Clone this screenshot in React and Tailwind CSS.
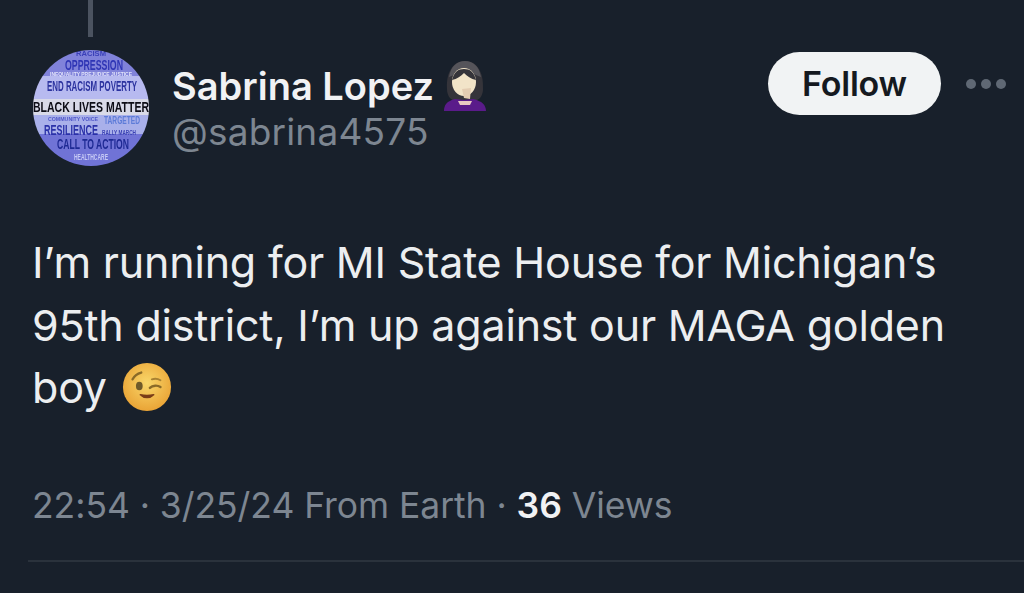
import React from "react";

const Avatar = () => (
  <svg width="118" height="120" viewBox="0 0 118 120" className="shrink-0">
    <defs>
      <clipPath id="disc">
        <circle cx="59" cy="60" r="58" />
      </clipPath>
      <filter id="soft">
        <feGaussianBlur stdDeviation="0.45" />
      </filter>
    </defs>
    <g clipPath="url(#disc)" filter="url(#soft)" fontFamily="'Liberation Sans',sans-serif" fontWeight="700">
      <rect width="118" height="120" fill="#8f8fe0" />
      <rect x="0" y="0" width="118" height="30" fill="#8082da" />
      <rect x="0" y="28" width="118" height="24" fill="#b7baf0" />
      <rect x="0" y="66" width="118" height="20" fill="#a9b0ea" />
      <rect x="0" y="86" width="118" height="34" fill="#7073d6" />
      <text x="44" y="8" fontSize="7" fill="#3a40b8" textLength="30" lengthAdjust="spacingAndGlyphs">RACISM</text>
      <text x="33" y="22" fontSize="15" fill="#2f35b5" textLength="58" lengthAdjust="spacingAndGlyphs">OPPRESSION</text>
      <text x="18" y="28" fontSize="6" fill="#e2e4fb" textLength="82" lengthAdjust="spacingAndGlyphs">INEQUALITY PREJUDICE JUSTICE</text>
      <text x="15" y="43" fontSize="15" fill="#2c339f" textLength="90" lengthAdjust="spacingAndGlyphs">END RACISM POVERTY</text>
      <rect x="0" y="51" width="118" height="16" fill="#d9dae8" />
      <text x="1" y="64" fontSize="15" fill="#0b0b14" textLength="116" lengthAdjust="spacingAndGlyphs">BLACK LIVES MATTER</text>
      <text x="16" y="73" fontSize="6" fill="#5057c8" textLength="50" lengthAdjust="spacingAndGlyphs">COMMUNITY VOICE</text>
      <text x="72" y="76" fontSize="10" fill="#5d7bd8" textLength="36" lengthAdjust="spacingAndGlyphs">TARGETED</text>
      <text x="12" y="87" fontSize="15" fill="#2a30a8" textLength="54" lengthAdjust="spacingAndGlyphs">RESILIENCE</text>
      <text x="70" y="87" fontSize="7" fill="#3b42b4" textLength="34" lengthAdjust="spacingAndGlyphs">RALLY MARCH</text>
      <text x="25" y="101" fontSize="14" fill="#1f2a94" textLength="72" lengthAdjust="spacingAndGlyphs">CALL TO ACTION</text>
      <text x="42" y="112" fontSize="9" fill="#c6caf5" textLength="34" lengthAdjust="spacingAndGlyphs">HEALTHCARE</text>
    </g>
  </svg>
);

const NameEmoji = () => (
  <svg width="50" height="52" viewBox="0 0 50 52" className="-mt-[4px] shrink-0">
    <path d="M7 30C6 12 14 2 25 2s19 10 18 28c0 6-3 10-6 11H13c-3-1-6-5-6-11z" fill="#35343a" />
    <path d="M9 18C11 7 17 2 25 2s14 5 16 16c-5-2-11-5-16-5s-11 3-16 5z" fill="#55545a" />
    <ellipse cx="24" cy="23" rx="12" ry="14" fill="#f2e4c8" />
    <path d="M12 21c2-8 6-11 12-11s10 3 12 11c-5-1-9-4-12-7-3 3-7 6-12 7z" fill="#35343a" />
    <path d="M22 30l2 9 6 1 1-11z" fill="#e4cdb2" />
    <path d="M4 52c0-6 3-10 11-12l9 1 9-1c9 2 13 6 13 12z" fill="#5a1b8a" />
    <path d="M18 42h14l-2 4H20z" fill="#e9c9c2" />
  </svg>
);

const WinkEmoji = () => (
  <svg width="50" height="50" viewBox="0 0 52 52">
    <defs>
      <radialGradient id="face" cx="50%" cy="42%" r="60%">
        <stop offset="0%" stopColor="#f9d76a" />
        <stop offset="100%" stopColor="#e9a234" />
      </radialGradient>
    </defs>
    <circle cx="26" cy="26" r="25" fill="url(#face)" />
    <path d="M11 18c2-4 5-6 9-7" stroke="#8a6a28" strokeWidth="2.5" fill="none" strokeLinecap="round" />
    <ellipse cx="18" cy="25" rx="3.5" ry="4.5" fill="#6f5a2a" />
    <path d="M29 27c3-3 8-3 11-1" stroke="#8a6a28" strokeWidth="2.5" fill="none" strokeLinecap="round" />
    <path d="M31 18c3-1 6-1 9 1" stroke="#a98232" strokeWidth="2" fill="none" strokeLinecap="round" />
    <path d="M19 34c4 4 10 4 14 0-4 1-10 1-14 0z" fill="#7a3d18" stroke="#7a3d18" strokeWidth="1.5" strokeLinejoin="round" />
  </svg>
);

export default function App() {
  return (
    <div className="relative h-[593px] w-[1024px] overflow-hidden bg-[#18202b] font-['Inter','Liberation_Sans',sans-serif] text-[#eef0f2]">
      {/* thread line coming down from the parent tweet */}
      <div className="ml-[88px] h-[37px] w-[5px] bg-[#4b5360]" />

      <div className="mt-[11px] flex h-[120px] items-start pl-[32px] pr-[18px]">
        <Avatar />
        <div className="ml-[22px] mt-[16px]">
          <div className="flex h-[45px] items-center">
            <span className="text-[38px] font-semibold leading-[45px] text-[#f1f2f4]">Sabrina Lopez</span>
            <span className="ml-[6px] flex">
              <NameEmoji />
            </span>
          </div>
          <div className="text-[37px] leading-[45px] tracking-[0.2px] text-[#7d8691]">@sabrina4575</div>
        </div>
        <div className="ml-auto mt-[4px] flex items-center">
          <button className="flex h-[63px] w-[173px] items-center justify-center rounded-full bg-[#f1f3f4] text-[34px] font-semibold tracking-[-0.2px] text-[#15191f]">
            Follow
          </button>
          <div className="ml-[25px] flex gap-[5px]">
            <span className="h-[10px] w-[10px] rounded-full bg-[#5f6874]" />
            <span className="h-[10px] w-[10px] rounded-full bg-[#5f6874]" />
            <span className="h-[10px] w-[10px] rounded-full bg-[#5f6874]" />
          </div>
        </div>
      </div>

      <div className="mt-[63px] pl-[32px] text-[43px] leading-[62.5px] tracking-[-0.2px] text-[#eceef0]">
        <p>I’m running for MI State House for Michigan’s</p>
        <p>95th district, I’m up against our MAGA golden</p>
        <p className="flex h-[62.5px] items-center">
          boy
          <span className="ml-[15px] flex">
            <WinkEmoji />
          </span>
        </p>
      </div>

      <div className="mt-[65px] pl-[32px] text-[35.5px] leading-[44px] tracking-[-0.05px] text-[#7d8691]">
        22:54 · 3/25/24 From Earth · <span className="font-semibold text-[#f1f2f4]">36</span> Views
      </div>

      <div className="ml-[28px] mt-[32px] h-[2px] bg-[#2a323c]" />
    </div>
  );
}
